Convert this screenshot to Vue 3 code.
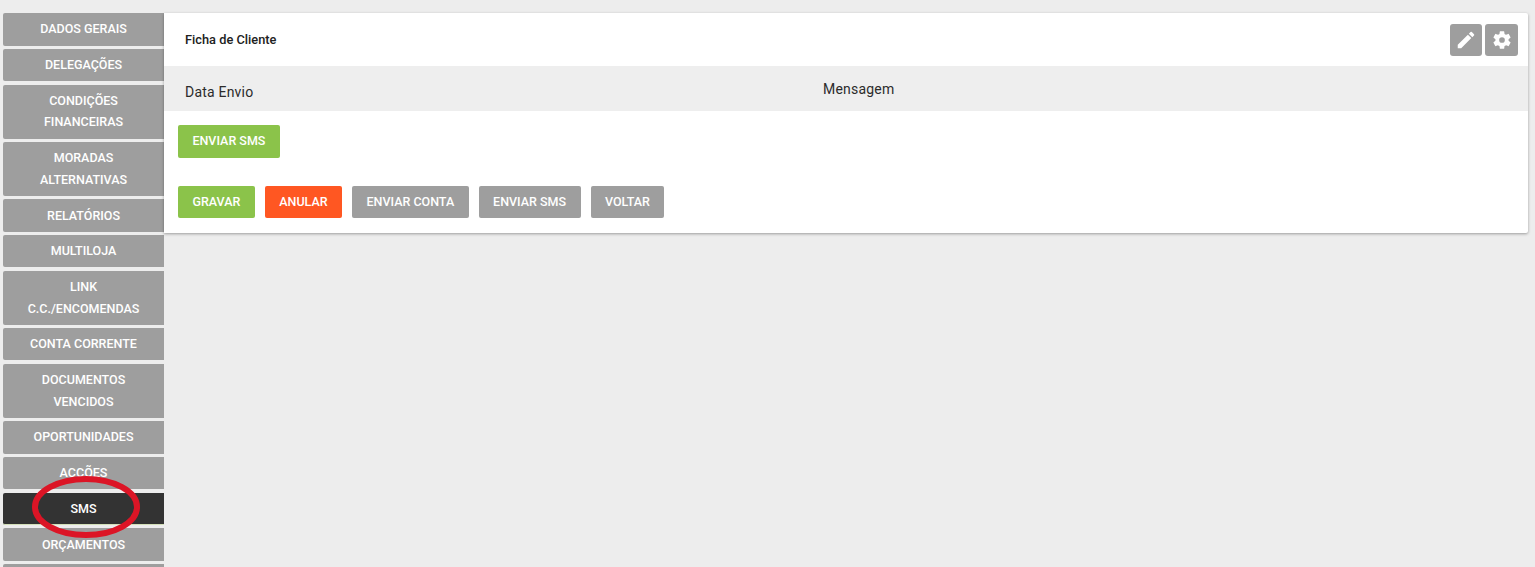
<script setup>
const items = [
  { lines: ['DADOS GERAIS'] },
  { lines: ['DELEGAÇÕES'] },
  { lines: ['CONDIÇÕES', 'FINANCEIRAS'] },
  { lines: ['MORADAS', 'ALTERNATIVAS'] },
  { lines: ['RELATÓRIOS'] },
  { lines: ['MULTILOJA'] },
  { lines: ['LINK', 'C.C./ENCOMENDAS'] },
  { lines: ['CONTA CORRENTE'] },
  { lines: ['DOCUMENTOS', 'VENCIDOS'] },
  { lines: ['OPORTUNIDADES'] },
  { lines: ['ACÇÕES'] },
  { lines: ['SMS'], active: true },
  { lines: ['ORÇAMENTOS'] },
  { lines: [] },
]
const actions = [
  { label: 'GRAVAR', tone: 'green' },
  { label: 'ANULAR', tone: 'orange' },
  { label: 'ENVIAR CONTA', tone: 'gray' },
  { label: 'ENVIAR SMS', tone: 'gray' },
  { label: 'VOLTAR', tone: 'gray' },
]
</script>

<template>
  <div class="page">
    <nav class="side">
      <a v-for="(it, i) in items" :key="i" class="nav" :class="{ active: it.active }">
        <span v-for="l in it.lines" :key="l" class="line">{{ l }}</span>
      </a>
    </nav>
    <main class="card">
      <header class="head">
        <h1>Ficha de Cliente</h1>
        <div class="tools">
          <button class="tool" aria-label="Editar">
            <svg viewBox="0 0 24 24" width="22" height="22"><path fill="#fff" d="M3 17.25V21h3.75L17.81 9.94l-3.75-3.75L3 17.25zM20.71 7.04a1 1 0 0 0 0-1.41l-2.34-2.34a1 1 0 0 0-1.41 0l-1.83 1.83 3.75 3.75 1.83-1.83z"/></svg>
          </button>
          <button class="tool wide" aria-label="Configurar">
            <svg viewBox="0 0 24 24" width="22" height="22"><path fill="#fff" d="M19.14 12.94c.04-.3.06-.61.06-.94 0-.32-.02-.64-.07-.94l2.03-1.58a.49.49 0 0 0 .12-.61l-1.92-3.32a.49.49 0 0 0-.59-.22l-2.39.96c-.5-.38-1.03-.7-1.62-.94l-.36-2.54a.48.48 0 0 0-.48-.41h-3.84a.48.48 0 0 0-.47.41l-.36 2.54c-.59.24-1.13.57-1.62.94l-2.39-.96a.48.48 0 0 0-.59.22L2.74 8.87a.48.48 0 0 0 .12.61l2.03 1.58c-.05.3-.09.63-.09.94s.02.64.07.94l-2.03 1.58a.49.49 0 0 0-.12.61l1.92 3.32c.12.22.37.29.59.22l2.39-.96c.5.38 1.03.7 1.62.94l.36 2.54c.05.24.24.41.48.41h3.84c.24 0 .44-.17.47-.41l.36-2.54c.59-.24 1.13-.56 1.62-.94l2.39.96c.22.08.47 0 .59-.22l1.92-3.32a.48.48 0 0 0-.12-.61l-2.01-1.58zM12 15.1a3.1 3.1 0 1 1 0-6.2 3.1 3.1 0 0 1 0 6.2z"/></svg>
          </button>
        </div>
      </header>
      <div class="thead">
        <span class="col-date">Data Envio</span>
        <span class="col-msg">Mensagem</span>
      </div>
      <div class="body">
        <button class="btn green first">ENVIAR SMS</button>
        <div class="actions">
          <button v-for="a in actions" :key="a.label" class="btn" :class="a.tone">{{ a.label }}</button>
        </div>
      </div>
    </main>
    <svg class="ring" viewBox="0 0 110 66" width="110" height="66"><ellipse cx="55" cy="33" rx="51" ry="28" fill="none" stroke="#dc1526" stroke-width="6"/></svg>
  </div>
</template>

<style>
html, body { margin: 0; height: 100%; overflow: hidden; background: #ededed; }
</style>

<style scoped>
.page {
  position: relative;
  display: flex;
  align-items: flex-start;
  height: 567px;
  overflow: hidden;
  padding: 13px 7px 0 3px;
  box-sizing: border-box;
  background: #ededed;
  font-family: Roboto, "Liberation Sans", sans-serif;
  color: #212121;
}
.side { width: 161px; flex: none; display: flex; flex-direction: column; }
.nav {
  display: flex;
  flex-direction: column;
  align-items: center;
  min-height: 32.5px;
  box-sizing: border-box;
  padding: 5.4px 0 5.5px;
  margin-bottom: 3.25px;
  background: #9e9e9e;
  border-radius: 2px 0 0 2px;
  color: #fff;
  font-size: 12.5px;
  font-weight: 500;
  line-height: 21.6px;
}
.nav.active { background: #333; border-bottom: 1px solid #d3dfb8; padding-bottom: 4.5px; }
.line { display: block; }
.card {
  flex: 1;
  height: 220px;
  background: #fff;
  border-radius: 0 2px 2px 0;
  box-shadow: 0 1px 3px rgba(0, 0, 0, .35);
}
.head {
  height: 53px;
  display: flex;
  align-items: flex-start;
  justify-content: space-between;
  padding: 11px 10px 0 21px;
  box-sizing: border-box;
}
h1 {
  margin: 9px 0 0;
  font-size: 12.8px;
  font-weight: 500;
  line-height: 14px;
  color: #212121;
}
.tools { display: flex; gap: 3px; }
.tool {
  width: 32px;
  height: 32px;
  padding: 0;
  border: 0;
  border-radius: 3px;
  background: #9e9e9e;
  display: flex;
  align-items: center;
  justify-content: center;
}
.tool.wide { width: 33px; }
.thead {
  height: 45px;
  background: #eee;
  display: flex;
  font-size: 14px;
  line-height: 16px;
  padding-left: 21px;
  color: #2b2b2b;
}
.col-date { width: 638px; padding-top: 18px; letter-spacing: .2px; }
.col-msg { padding-top: 15px; letter-spacing: .2px; }
.body { padding: 14px 14px 0; }
.btn {
  display: block;
  height: 32px;
  padding: 0 14.45px;
  border: 0;
  border-radius: 2px;
  color: #fff;
  font: 500 12.5px/1 Roboto, "Liberation Sans", sans-serif;
}
.btn.first { height: 33px; padding-bottom: 1px; }
.actions { display: flex; gap: 10px; margin-top: 28px; }
.green { background: #8bc34a; }
.orange { background: #ff5722; }
.gray { background: #9e9e9e; }
.ring { position: absolute; left: 31px; top: 474px; }
</style>
